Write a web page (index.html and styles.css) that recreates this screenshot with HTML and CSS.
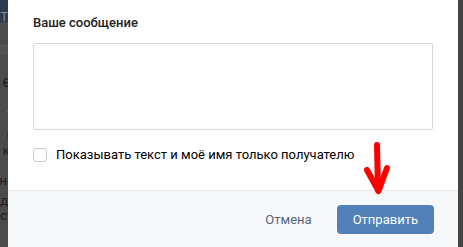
FILE: index.html
```html
<!DOCTYPE html>
<html lang="ru">
<head>
<meta charset="utf-8">
<link rel="stylesheet" href="styles.css">
</head>
<body>
<div class="screen">
  <div class="backdrop-left">
    <div class="bd-top"><span>Т</span></div>
    <div class="bd-band"></div>
    <div class="bd-lines">
      <span class="l1">е</span>
      <span class="l2">т</span>
      <span class="l3">в</span>
      <span class="l4">кт</span>
      <span class="l5">на</span>
      <span class="l6">д</span>
      <span class="l7">ст</span>
    </div>
  </div>
  <div class="dialog">
    <div class="body">
      <div class="label">Ваше сообщение</div>
      <div class="textarea"></div>
      <label class="check">
        <span class="box"></span>
        <span class="check-text">Показывать текст и моё имя только получателю</span>
      </label>
    </div>
    <div class="footer">
      <span class="cancel">Отмена</span>
      <span class="send">Отправить</span>
    </div>
  </div>
  <div class="backdrop-right"></div>
  <svg class="arrow" width="40" height="60" viewBox="0 0 40 60">
    <path d="M18 4 L19 49" stroke="#ff0000" stroke-width="6" stroke-linecap="round" fill="none"/>
    <path d="M8 29 L19.5 50 L28 27" stroke="#ff0000" stroke-width="6" stroke-linecap="round" stroke-linejoin="round" fill="none"/>
  </svg>
</div>
</body>
</html>
```
FILE: styles.css
```css
html, body {
  margin: 0;
  padding: 0;
}
body {
  width: 463px;
  height: 247px;
  overflow: hidden;
  font-family: Roboto, "Open Sans", "Liberation Sans", sans-serif;
  background: #4a4a4a;
}
.screen {
  position: relative;
  display: flex;
  width: 463px;
  height: 247px;
}
.backdrop-left {
  width: 8px;
  flex: none;
  background: #4b4b4b;
  overflow: hidden;
  display: flex;
  flex-direction: column;
}
.bd-top {
  height: 22px;
  background: #2c3b4e;
  color: #7d8a99;
  font-size: 13px;
  line-height: 22px;
  direction: rtl;
  padding-top: 6px;
  box-sizing: border-box;
}
.bd-band {
  height: 7px;
  margin-top: 23px;
  background: #525252;
  border-top: 1px solid #5a5a5a;
  border-bottom: 1px solid #5a5a5a;
}
.bd-lines {
  display: flex;
  flex-direction: column;
  align-items: flex-end;
  font-size: 13px;
  color: #1f1f1f;
}
.bd-lines span {
  display: block;
  white-space: nowrap;
  line-height: 15px;
}
.bd-lines .l1 { margin-top: 20px; font-size: 16px; margin-right: -3px; }
.bd-lines .l2 { margin-top: 17px; color: #6a6a6a; margin-right: -5px; }
.bd-lines .l3 { margin-top: 6px; font-size: 11px; margin-right: -5px; }
.bd-lines .l4 { margin-top: 1px; margin-right: -8px; }
.bd-lines .l5 { margin-top: 15px; margin-right: -6px; }
.bd-lines .l6 { margin-top: 5px; }
.bd-lines .l7 { margin-top: 0; margin-right: -5px; }

.dialog {
  width: 450px;
  flex: none;
  background: #fff;
  display: flex;
  flex-direction: column;
}
.body {
  padding: 15px 25px 0 25px;
  height: 190px;
  flex: none;
  box-sizing: border-box;
}
.label {
  font-size: 13px;
  font-weight: 500;
  color: #222;
  line-height: 16px;
  margin-bottom: 12px;
}
.textarea {
  width: 400px;
  height: 87px;
  box-sizing: border-box;
  border: 1px solid #d3d9de;
  border-radius: 2px;
  background: #fff;
}
.check {
  display: flex;
  align-items: center;
  margin-top: 17px;
}
.box {
  width: 14px;
  height: 14px;
  box-sizing: border-box;
  border: 1px solid #c1c9d1;
  border-radius: 3px;
  margin-right: 9px;
  background: #fff;
}
.check-text {
  font-size: 13px;
  color: #000;
  line-height: 16px;
}
.footer {
  flex: 1;
  background: #f7f8fa;
  border-top: 1px solid #e7e8ec;
  display: flex;
  align-items: flex-start;
  justify-content: flex-end;
  padding: 14px 24px 0 0;
}
.cancel {
  font-size: 13px;
  color: #55677d;
  line-height: 29px;
  margin-right: 25px;
}
.send {
  display: block;
  height: 29px;
  line-height: 29px;
  padding: 0 16px;
  background: #5181b8;
  color: #fff;
  font-size: 13px;
  border-radius: 4px;
}
.backdrop-right {
  flex: 1;
  background: #454545;
}
.arrow {
  position: absolute;
  left: 359px;
  top: 141px;
}
```
